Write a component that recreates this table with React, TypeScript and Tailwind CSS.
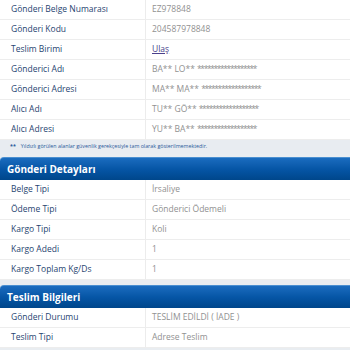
import React from "react";

type Row = { label: string; value: string; link?: boolean; stars?: boolean };

const STARS = "******************";

const sec1: Row[] = [
  { label: "Gönderi Belge Numarası", value: "EZ978848" },
  { label: "Gönderi Kodu", value: "204587978848" },
  { label: "Teslim Birimi", value: "Ulaş", link: true },
  { label: "Gönderici Adı", value: "BA** LO**", stars: true },
  { label: "Gönderici Adresi", value: "MA** MA**", stars: true },
  { label: "Alıcı Adı", value: "TU** GÖ**", stars: true },
  { label: "Alıcı Adresi", value: "YU** BA**", stars: true },
];

const sec2: Row[] = [
  { label: "Belge Tipi", value: "İrsaliye" },
  { label: "Ödeme Tipi", value: "Gönderici Ödemeli" },
  { label: "Kargo Tipi", value: "Koli" },
  { label: "Kargo Adedi", value: "1" },
  { label: "Kargo Toplam Kg/Ds", value: "1" },
];

const sec3: Row[] = [
  { label: "Gönderi Durumu", value: "TESLİM EDİLDİ ( İADE )" },
  { label: "Teslim Tipi", value: "Adrese Teslim" },
];

function Rows({ rows }: { rows: Row[] }) {
  return (
    <div className="bg-white">
      {rows.map((r) => (
        <div key={r.label} className="flex h-[20px] border-b border-[#ededed]">
          <div className="w-[146px] shrink-0 pl-[11px] flex items-center text-[8.5px] text-[#1f4470] border-r border-[#ececec]">
            {r.label}
          </div>
          <div className="flex-1 pl-[6px] flex items-center text-[8.5px] text-[#919191] whitespace-pre">
            {r.link ? (
              <span className="underline text-[#4a3f8c]">{r.value}</span>
            ) : r.stars ? (
              <>
                {r.value + " "}
                <span className="tracking-[-1.4px]">{STARS}</span>
              </>
            ) : (
              r.value
            )}
          </div>
        </div>
      ))}
    </div>
  );
}

function Header({ title }: { title: string }) {
  return (
    <div className="h-[23px] rounded-tl-[4px] bg-gradient-to-b from-[#1a6cbf] via-[#0656a6] to-[#00468b] border-t border-[#4a8fd0] flex items-center pl-[7px] text-white font-bold text-[10px]">
      {title}
    </div>
  );
}

export default function App() {
  return (
    <div className="w-[350px] h-[350px] overflow-hidden bg-[#e9edf1]" style={{ fontFamily: '"Open Sans", "Noto Sans", sans-serif' }}>
      <Rows rows={sec1} />
      <div className="h-[14px] flex items-center pl-[10px] text-[5.3px] text-[#2a5a9a] bg-[#e8ecf1]">
        <span className="font-bold mr-[5px]">**</span>
        Yıldızlı görülen alanlar güvenlik gerekçesiyle tam olarak gösterilmemektedir.
      </div>
      <div className="h-[3px]" />
      <Header title="Gönderi Detayları" />
      <Rows rows={sec2} />
      <div className="h-[5px]" />
      <Header title="Teslim Bilgileri" />
      <Rows rows={sec3} />
    </div>
  );
}
